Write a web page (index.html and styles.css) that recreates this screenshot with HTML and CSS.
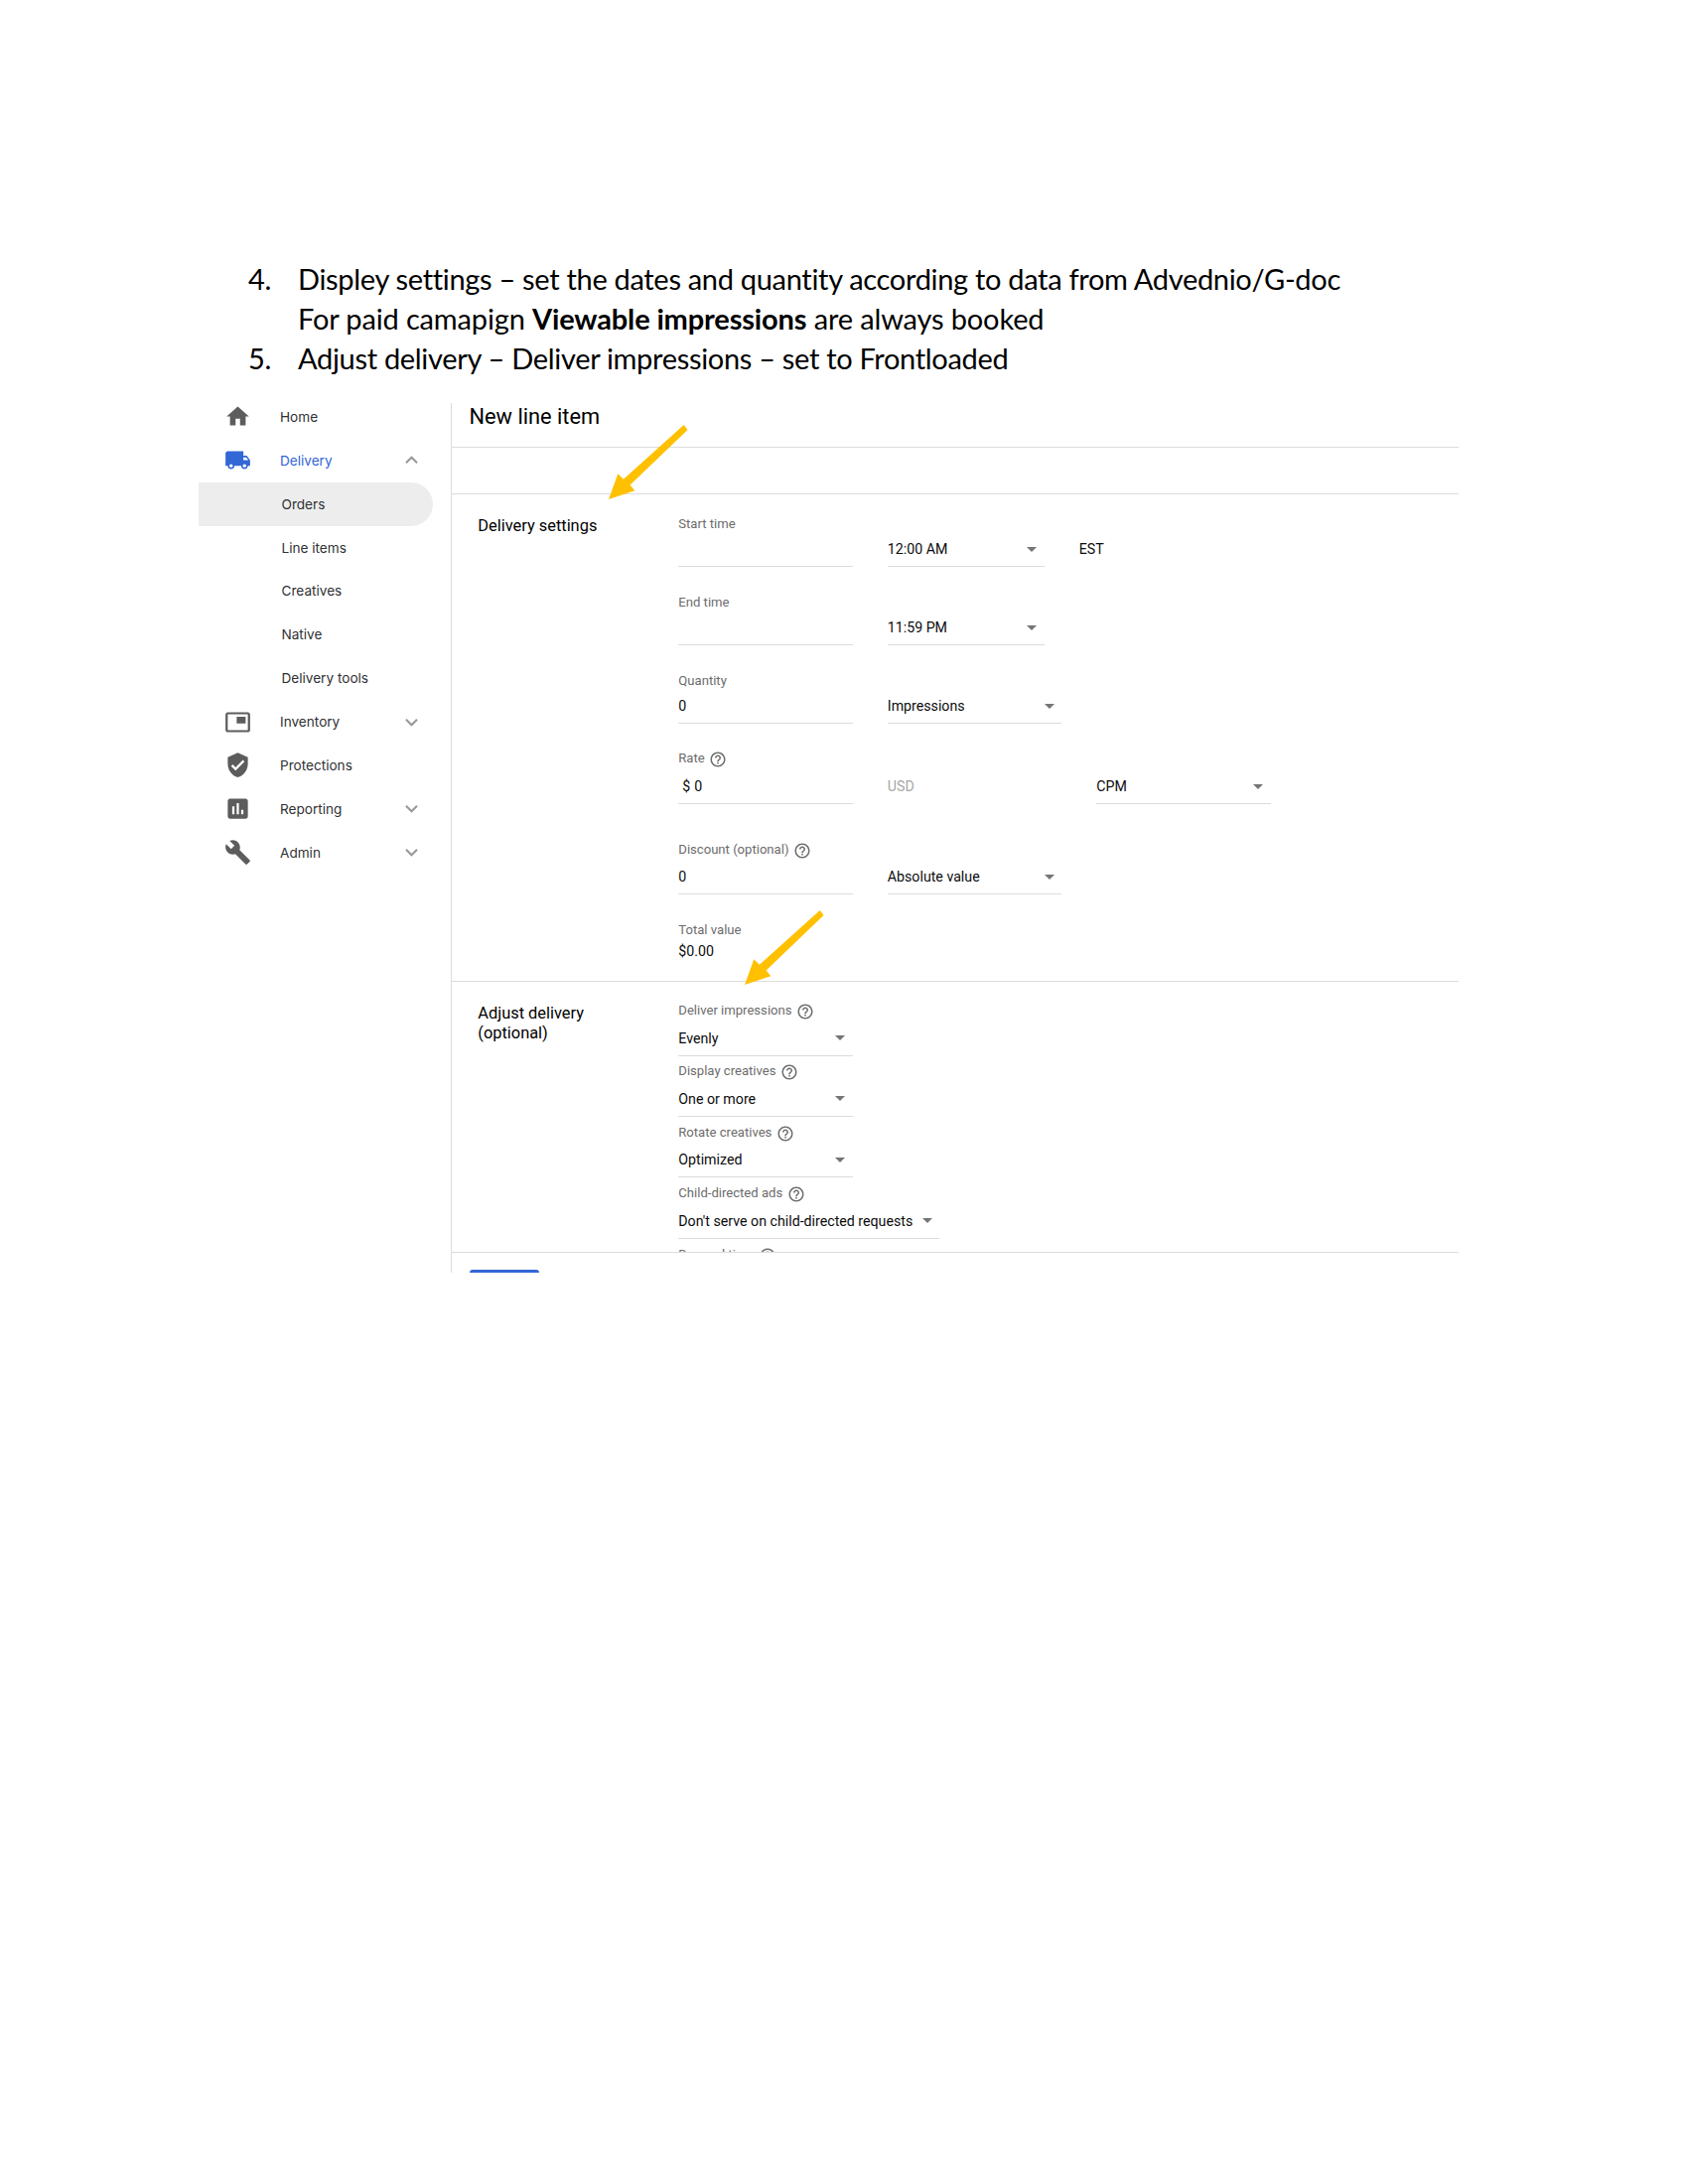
FILE: index.html
```html
<!DOCTYPE html>
<html lang="en">
<head>
<meta charset="utf-8">
<title>Line item delivery settings</title>
<link rel="stylesheet" href="styles.css">
</head>
<body>
<svg class="defs" width="0" height="0" aria-hidden="true">
  <symbol id="help" viewBox="0 0 24 24"><path d="M11 18h2v-2h-2v2zm1-16C6.48 2 2 6.48 2 12s4.480 10 10 10 10-4.480 10-10S17.520 2 12 2zm0 18c-4.410 0-8-3.590-8-8s3.590-8 8-8 8 3.590 8 8-3.590 8-8 8zm0-14c-2.210 0-4 1.790-4 4h2c0-1.100.9-2 2-2s2 .9 2 2c0 2-3 1.750-3 5h2c0-2.250 3-2.500 3-5 0-2.210-1.790-4-4-4z"/></symbol>
  <symbol id="more" viewBox="0 0 24 24"><path d="M16.590 8.590L12 13.170 7.410 8.590 6 10l6 6 6-6z"/></symbol>
  <symbol id="less" viewBox="0 0 24 24"><path d="M12 8l-6 6 1.410 1.410L12 10.830l4.590 4.580L18 14z"/></symbol>
</svg>

<main class="page">
  <ol class="steps">
    <li><span class="num">4.</span><p>Displey settings – set the dates and quantity according to data from Advednio/G-doc<br><span class="note">For paid camapign <b>Viewable impressions</b> are always booked</span></p></li>
    <li><span class="num">5.</span><p>Adjust delivery – Deliver impressions – set to Frontloaded</p></li>
  </ol>

  <div class="app">
    <nav class="side">
      <a class="item"><svg class="ico" viewBox="0 0 24 24"><path d="M10 20v-6h4v6h5v-8h3L12 3 2 12h3v8z"/></svg>Home</a>
      <a class="item active"><svg class="ico" viewBox="0 0 24 24"><path d="M20 8h-3V4H3c-1.100 0-2 .9-2 2v11h2c0 1.660 1.340 3 3 3s3-1.340 3-3h6c0 1.660 1.340 3 3 3s3-1.340 3-3h2v-5l-3-4zM6 18.500c-.83 0-1.500-.67-1.500-1.500s.67-1.500 1.500-1.500 1.500.67 1.500 1.500-.67 1.500-1.500 1.500zm13.500-9l1.960 2.500H17V9.500h2.500zm-1.500 9c-.83 0-1.500-.67-1.500-1.500s.67-1.500 1.500-1.500 1.500.67 1.500 1.500-.67 1.500-1.500 1.500z"/></svg>Delivery<svg class="chev"><use href="#less"/></svg></a>
      <a class="item sub selected">Orders</a>
      <a class="item sub">Line items</a>
      <a class="item sub">Creatives</a>
      <a class="item sub">Native</a>
      <a class="item sub">Delivery tools</a>
      <a class="item"><svg class="ico" viewBox="0 0 24 24"><path d="M19 7h-8v6h8V7zm2-4H3c-1.100 0-2 .9-2 2v14c0 1.100.9 1.980 2 1.980h18c1.100 0 2-.88 2-1.980V5c0-1.100-.9-2-2-2zm0 16.010H3V4.980h18v14.030z"/></svg>Inventory<svg class="chev"><use href="#more"/></svg></a>
      <a class="item"><svg class="ico" viewBox="0 0 24 24"><path d="M12 1L3 5v6c0 5.550 3.840 10.740 9 12 5.160-1.260 9-6.450 9-12V5l-9-4zm-2 16l-4-4 1.410-1.410L10 14.170l6.590-6.590L18 9l-8 8z"/></svg>Protections</a>
      <a class="item"><svg class="ico" viewBox="0 0 24 24"><path d="M19 3H5c-1.100 0-2 .9-2 2v14c0 1.100.9 2 2 2h14c1.100 0 2-.9 2-2V5c0-1.100-.9-2-2-2zM9 17H7v-7h2v7zm4 0h-2V7h2v10zm4 0h-2v-4h2v4z"/></svg>Reporting<svg class="chev"><use href="#more"/></svg></a>
      <a class="item"><svg class="ico" viewBox="0 0 24 24"><path d="M22.700 19l-9.100-9.100c.9-2.300.4-5-1.500-6.900-2-2-5-2.400-7.400-1.300L9 6 6 9 1.600 4.700C.4 7.100.9 10.100 2.900 12.100c1.900 1.900 4.600 2.400 6.900 1.500l9.100 9.100c.4.4 1 .4 1.400 0l2.300-2.300c.5-.4.5-1.100.1-1.400z"/></svg>Admin<svg class="chev"><use href="#more"/></svg></a>
    </nav>

    <section class="main">
      <header class="title">New line item</header>
      <div class="strip"></div>

      <div class="panel settings">
        <h2>Delivery settings</h2>
        <div class="rows">
          <div class="row r-start">
            <div class="field"><label>Start time</label><div class="value"></div></div>
            <div class="value select narrow">12:00 AM</div>
            <div class="value plain">EST</div>
          </div>
          <div class="row">
            <div class="field"><label>End time</label><div class="value"></div></div>
            <div class="value select narrow">11:59 PM</div>
          </div>
          <div class="row">
            <div class="field"><label>Quantity</label><div class="value">0</div></div>
            <div class="value select">Impressions</div>
          </div>
          <div class="row r-rate">
            <div class="field"><label>Rate <svg class="help"><use href="#help"/></svg></label><div class="value money"><span>$</span>0</div></div>
            <div class="value plain muted">USD</div>
            <div class="value select">CPM</div>
          </div>
          <div class="row r-discount">
            <div class="field"><label>Discount (optional) <svg class="help"><use href="#help"/></svg></label><div class="value">0</div></div>
            <div class="value select">Absolute value</div>
          </div>
          <div class="total"><label>Total value</label><div>$0.00</div></div>
        </div>
      </div>

      <div class="panel adjust">
        <h2>Adjust delivery (optional)</h2>
        <div class="rows">
          <div class="field"><label>Deliver impressions <svg class="help"><use href="#help"/></svg></label><div class="value select">Evenly</div></div>
          <div class="field"><label>Display creatives <svg class="help"><use href="#help"/></svg></label><div class="value select">One or more</div></div>
          <div class="field"><label>Rotate creatives <svg class="help"><use href="#help"/></svg></label><div class="value select">Optimized</div></div>
          <div class="field"><label>Child-directed ads <svg class="help"><use href="#help"/></svg></label><div class="value select wide">Don't serve on child-directed requests</div></div>
          <div class="field"><label>Day and time <svg class="help"><use href="#help"/></svg></label></div>
        </div>
      </div>

      <footer class="actions"><div class="save"></div></footer>
    </section>

    <svg class="arrow first" viewBox="0 0 80 77"><path d="M75.700 1L79.500 6 21.600 61.500 26.300 67.300 0 76 9.300 50.300 14.900 55.800z"/></svg>
    <svg class="arrow second" viewBox="0 0 80 77"><path d="M75.700 1L79.500 6 21.600 61.500 26.300 67.300 0 76 9.300 50.300 14.900 55.800z"/></svg>
  </div>
</main>
</body>
</html>
```
FILE: styles.css
```css
* { box-sizing: border-box; }

body {
  margin: 0;
  background: #fff;
  color: #000;
}

.defs { display: block; height: 0; }

.page {
  height: 2200px;
  padding: 260.500px 0 0 200px;
  overflow: hidden;
}

/* Numbered instructions */
.steps {
  margin: 0;
  padding: 0 0 0 50px;
  height: 145.500px;
  list-style: none;
  font: 29px/40.400px Lato, "Open Sans", sans-serif;
  letter-spacing: -0.31px;
}
.steps li { display: flex; }
.steps p { margin: 0; white-space: nowrap; }
.num { width: 50px; }
.note { letter-spacing: -0.150px; }

/* Application window */
.app {
  position: relative;
  display: flex;
  width: 1269px;
  height: 876px;
  overflow: hidden;
  font-family: Roboto, sans-serif;
}

.side {
  flex: none;
  width: 254px;
  margin-top: -8px;
  font: 13.600px Inter, sans-serif;
  color: #303134;
}
.item {
  display: flex;
  align-items: center;
  height: 43.880px;
  padding-left: 26px;
}
.sub { padding-left: 83.500px; }
.selected {
  width: 236px;
  background: #ededed;
  border-radius: 0 22px 22px 0;
}
.active, .active .ico { color: #3367d6; fill: #3367d6; }
.ico { width: 27px; height: 27px; margin-right: 29px; fill: #5c5c5c; }
.chev { width: 25px; height: 25px; margin: 0 27.500px 0 auto; fill: #999; }

.main {
  display: flex;
  flex-direction: column;
  width: 1015px;
  border-left: 1px solid #dcdcdc;
}
.main > * { flex: none; }
.title {
  height: 45px;
  padding-left: 17.500px;
  border-bottom: 1px solid #dcdcdc;
  font-size: 21.800px;
  line-height: 27px;
}
.strip { height: 47px; border-bottom: 1px solid #dcdcdc; }

.panel {
  display: grid;
  grid-template-columns: 202px 1fr;
  padding-left: 26.300px;
  border-bottom: 1px solid #dcdcdc;
}
.panel h2 {
  width: 130px;
  margin: 0;
  font-size: 16.400px;
  font-weight: 400;
  line-height: 20px;
}
.settings { height: 491px; }
.settings h2 { padding-top: 22px; }
.adjust { height: 273px; overflow: hidden; }
.adjust h2 { padding-top: 22px; }

.row {
  display: flex;
  align-items: flex-end;
  gap: 35px;
  height: 79px;
}
.r-start { height: 73px; }
.r-rate { height: 81px; }
.r-discount { height: 91px; }

.field { display: flex; flex-direction: column; gap: 9px; }
.r-rate .field { gap: 12px; }
.r-discount .field { gap: 11px; }

label {
  display: flex;
  align-items: center;
  gap: 6px;
  height: 16px;
  font-size: 13.100px;
  line-height: 16px;
  color: #6c6c6c;
  white-space: nowrap;
}
.help { width: 18px; height: 18px; margin: 2px -1.500px 0; fill: #6c6c6c; }

.value {
  display: flex;
  justify-content: space-between;
  width: 175.500px;
  height: 26px;
  border-bottom: 1px solid #dcdcdc;
  font-size: 14.200px;
  line-height: 16px;
  color: #0c0c0c;
  white-space: nowrap;
}
.select { padding-right: 7.500px; }
.select::after {
  content: "";
  margin-top: 5.500px;
  height: 0;
  border: 5.500px solid transparent;
  border-top-color: #757575;
  border-bottom: 0;
}
.narrow { width: 158px; }
.wide { width: 263px; }
.plain { border-color: transparent; }
.muted { color: #a6a6a6; }
.money { justify-content: flex-start; gap: 4px; padding-left: 4px; }

.total { padding-top: 28px; }
.total div { padding-top: 5px; font-size: 14.200px; line-height: 16px; color: #0c0c0c; }

.adjust .field { gap: 11.500px; height: 61.400px; justify-content: flex-end; }
.adjust .field:first-child { height: 74.500px; }
.adjust .field:last-child { justify-content: flex-start; padding-top: 8.500px; }

.actions { height: 60px; padding: 17px 0 0 18px; }
.save { width: 70px; height: 36px; border-radius: 3px; background: #3367d6; }

/* Callout arrows drawn over the window */
.arrow { position: absolute; width: 80px; height: 77px; fill: #ffc000; }
.first { left: 413px; top: 20.500px; }
.second { left: 550.300px; top: 509.500px; }
```
